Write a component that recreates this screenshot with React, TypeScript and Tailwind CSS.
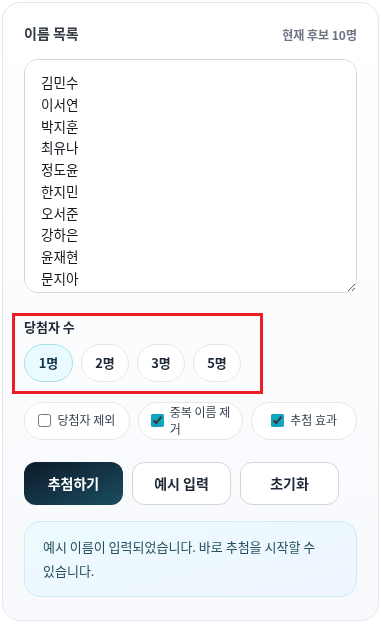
import React, { useState } from "react";

const names = [
  "김민수",
  "이서연",
  "박지훈",
  "최유나",
  "정도윤",
  "한지민",
  "오서준",
  "강하은",
  "윤재현",
  "문지아",
];

const counts = [1, 2, 3, 5];

function App() {
  const [text, setText] = useState(names.join("\n"));
  const [count, setCount] = useState(1);
  const [opts, setOpts] = useState({ exclude: false, dedupe: true, effect: true });

  const toggle = (key: keyof typeof opts) =>
    setOpts({ ...opts, [key]: !opts[key] });

  return (
    <div
      className="min-h-screen bg-white p-[2px]"
      style={{ fontFamily: '"Noto Sans CJK KR", "Noto Sans", sans-serif' }}
    >
      <div className="h-[619px] rounded-[18px] border border-[#e3e6ea] bg-gradient-to-b from-white to-[#f7f9fc] px-[21px] pt-[20px]">
        <div className="flex items-end justify-between">
          <h2 className="text-[14px] font-semibold text-[#333a44]">이름 목록</h2>
          <span className="text-[12px] font-semibold text-[#6b7280]">
            현재 후보 {names.length}명
          </span>
        </div>

        <textarea
          value={text}
          onChange={(e) => setText(e.target.value)}
          className="mt-[15px] block h-[234px] w-full resize-y rounded-[14px] border border-[#d1d5db] bg-white px-[16px] py-[12px] text-[13.6px] leading-[1.6] text-[#161a20] outline-0"
        />

        <div className="relative mt-[24px]">
          <div className="absolute -left-[12px] -top-[4px] h-[81px] w-[251px] border-[3px] border-[#ee1d23]" />
          <p className="text-[13px] font-semibold text-[#1f2937]">당첨자 수</p>
          <div className="mt-[7px] flex gap-2">
            {counts.map((c) => (
              <button
                key={c}
                onClick={() => setCount(c)}
                className={
                  c === count
                    ? "h-[38px] w-[49px] rounded-full border border-[#a9e0ea] bg-[#e9fbfe] text-[13px] font-bold text-[#12354a]"
                    : "h-[38px] w-[48px] rounded-full border border-[#e5e7eb] bg-white text-[13px] font-bold text-[#1f2937]"
                }
              >
                {c}명
              </button>
            ))}
          </div>
        </div>

        <div className="mt-[20px] grid grid-cols-3 gap-2">
          {[
            { key: "exclude" as const, label: "당첨자 제외" },
            { key: "dedupe" as const, label: "중복 이름 제거" },
            { key: "effect" as const, label: "추첨 효과" },
          ].map((o) => (
            <label
              key={o.key}
              className="flex h-[38px] cursor-pointer items-center justify-center gap-[6px] rounded-full border border-[#e5e7eb] bg-white px-3 text-[12px] leading-[1.4] text-[#374151]"
            >
              <input
                type="checkbox"
                checked={opts[o.key]}
                onChange={() => toggle(o.key)}
                className="h-[13px] w-[13px] shrink-0 accent-[#0ea5c0]"
              />
              <span>{o.label}</span>
            </label>
          ))}
        </div>

        <div className="mt-[22px] flex gap-[9px]">
          <button className="h-[43px] w-[99px] rounded-[12px] bg-gradient-to-br from-[#0c1b2a] to-[#1a4e60] text-[14px] font-bold text-white">
            추첨하기
          </button>
          <button
            onClick={() => setText(names.join("\n"))}
            className="h-[43px] w-[99px] rounded-[12px] border border-[#d1d5db] bg-white text-[14px] font-bold text-[#1f2937]"
          >
            예시 입력
          </button>
          <button
            onClick={() => setText("")}
            className="h-[43px] w-[99px] rounded-[12px] border border-[#d1d5db] bg-white text-[14px] font-bold text-[#1f2937]"
          >
            초기화
          </button>
        </div>

        <div className="mt-[16px] break-keep rounded-[16px] border border-[#cdebf3] bg-gradient-to-br from-[#ecfbfe] to-[#eff5ff] px-[18px] py-[13px] text-[13px] leading-[24px] text-[#24505f]">
          예시 이름이 입력되었습니다. 바로 추첨을 시작할 수 있습니다.
        </div>
      </div>
    </div>
  );
}

export default App;
